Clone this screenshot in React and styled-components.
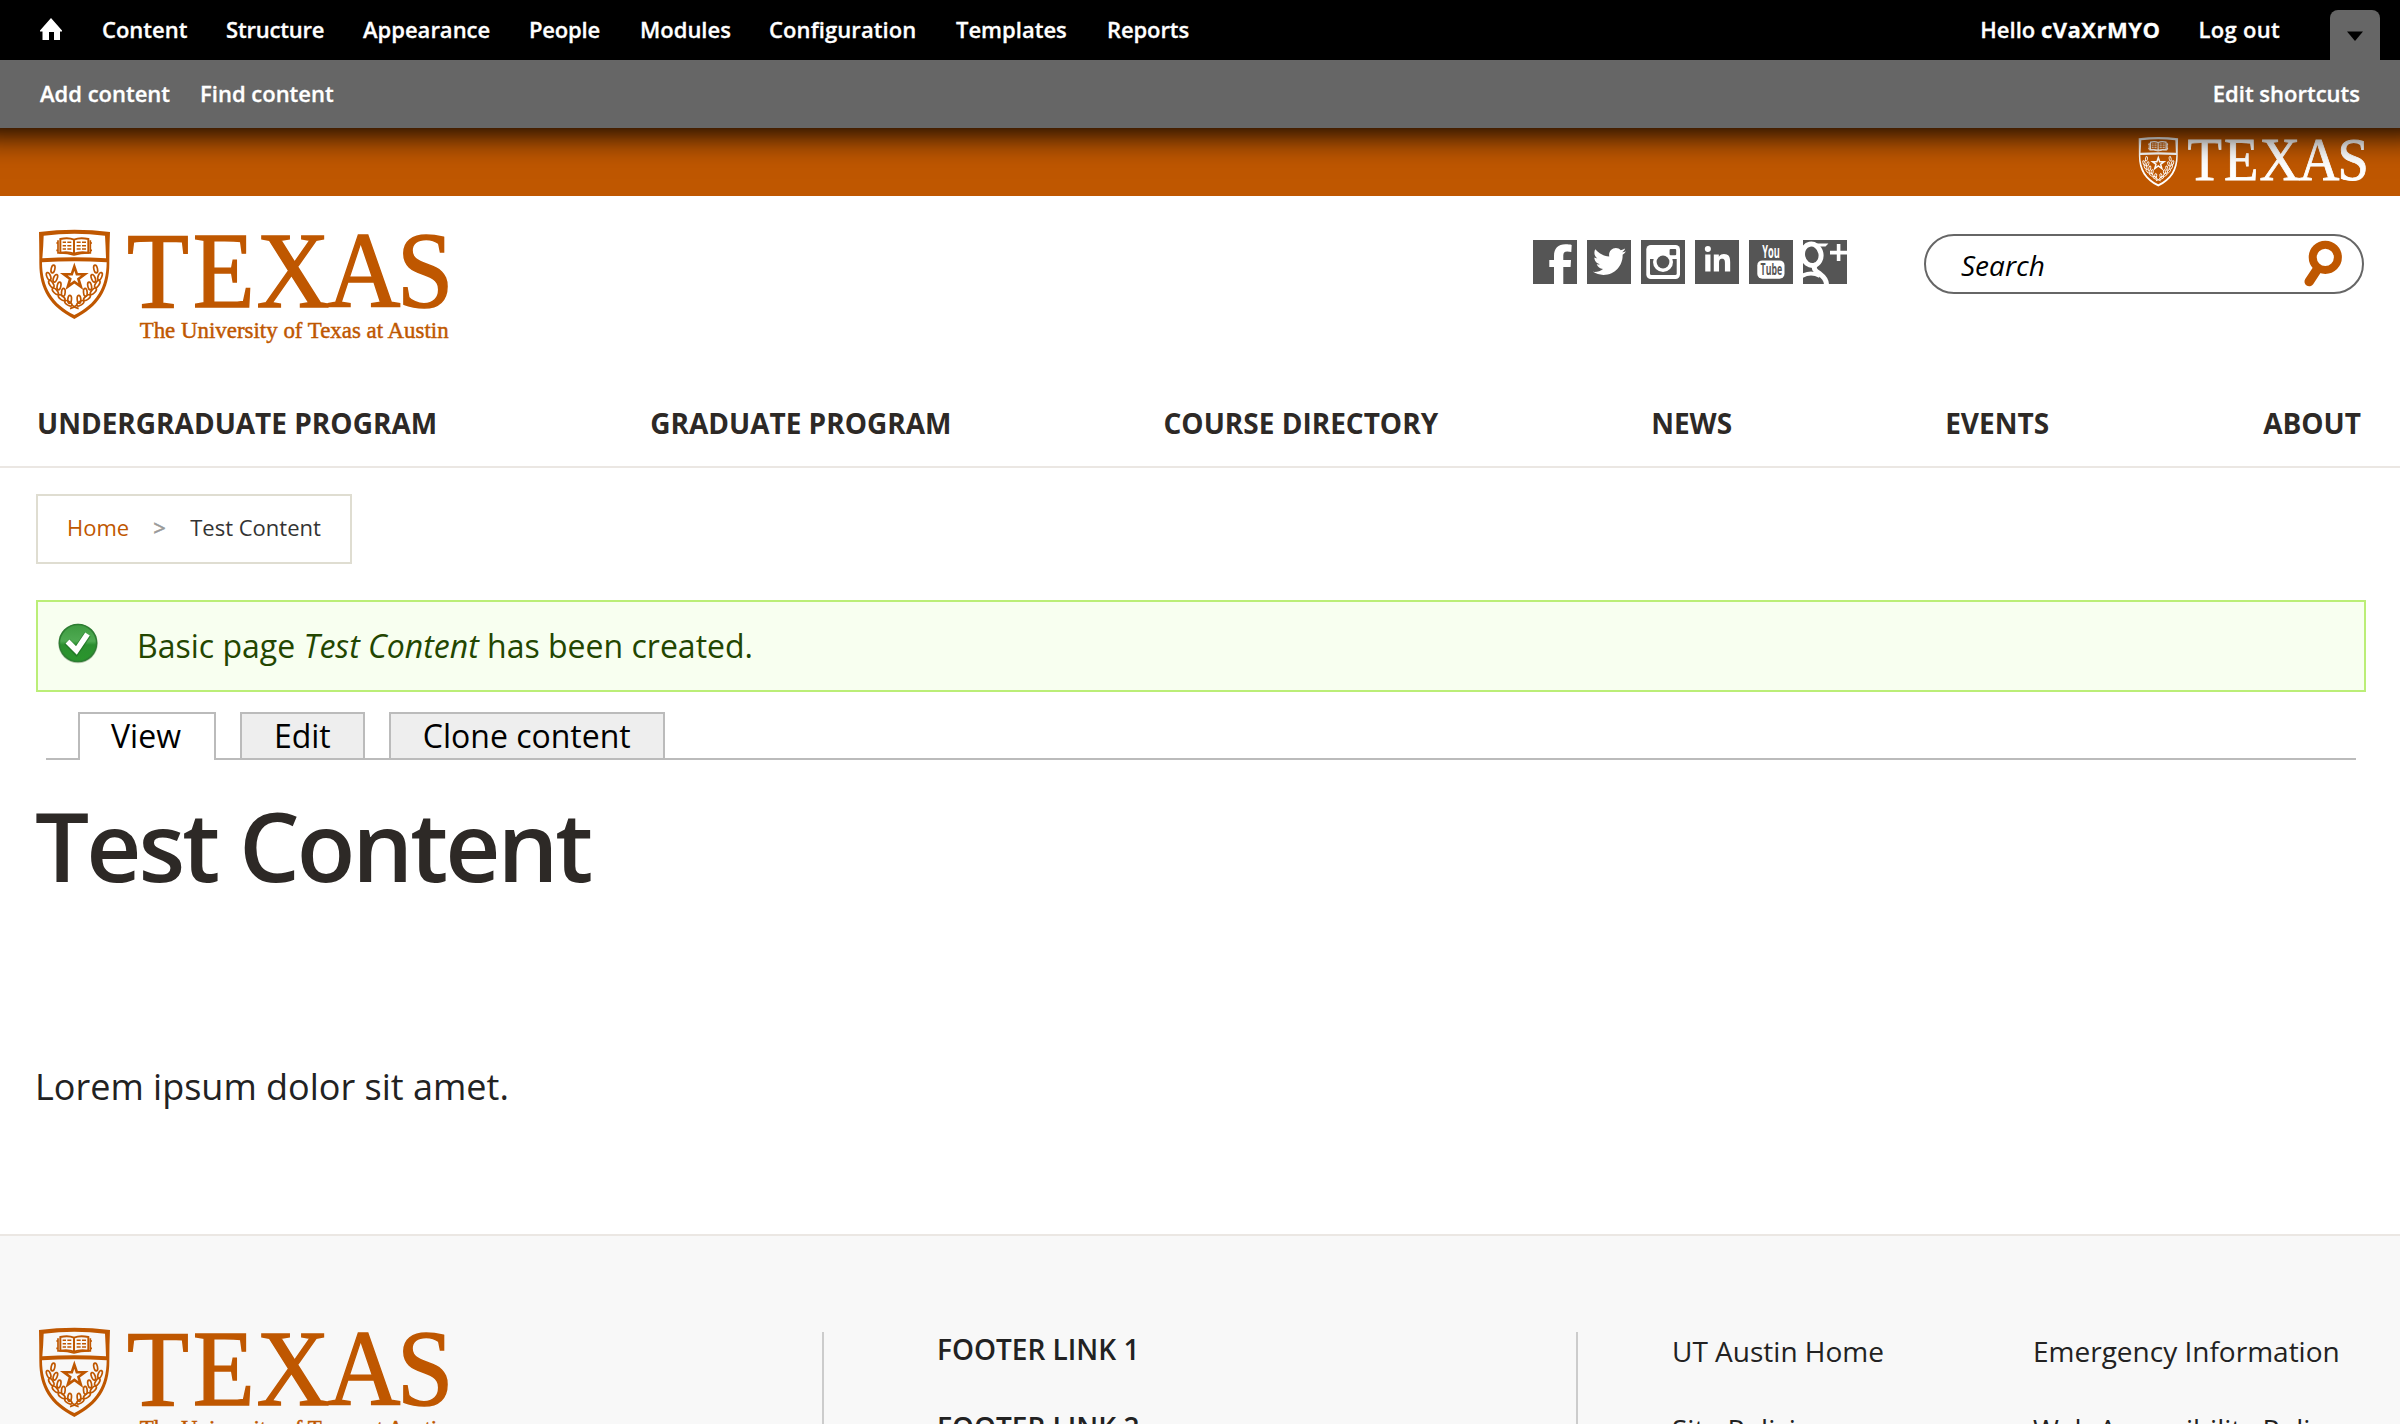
import React from "react";
import styled, { createGlobalStyle } from "styled-components";
import { FaTwitter, FaLinkedinIn } from "react-icons/fa";

const orange = "#bf5700";
const charcoal = "#2d2926";
const sans = `"Open Sans", "Noto Sans", sans-serif`;

const GlobalStyle = createGlobalStyle`
  *, *::before, *::after { box-sizing: border-box; }
  html, body { margin: 0; padding: 0; background: #fff; }
  body { font-family: ${sans}; color: #222; }
`;

const Page = styled.div`
  width: 2400px;
  height: 1424px;
  overflow: hidden;
  display: flex;
  flex-direction: column;
`;

/* ---------- admin toolbar ---------- */
const AdminBar = styled.div`
  position: relative;
  z-index: 2;
  flex: none;
  color: #fff;
  font-size: 22px;
  font-weight: 600;
  -webkit-text-stroke: 0.3px #fff;
  box-shadow: 0 -24px 30px 30px #000;
`;
const MenuRow = styled.div`
  display: flex;
  height: 60px;
  padding: 0 20px 0 40px;
  background: #000;
  line-height: 59px;
  white-space: nowrap;
`;
const HomeLink = styled.a`
  width: 62px;
  padding-top: 18px;
  svg { display: block; }
`;
const MenuLink = styled.a`
  width: ${(p) => p.$w}px;
  letter-spacing: ${(p) => p.$ls || 0}px;
`;
const UserArea = styled.div`
  display: flex;
  margin-left: auto;
`;
const Greeting = styled.span`
  margin-right: 38px;
  b { font-weight: 700; letter-spacing: 0.5px; }
`;
const LogOut = styled.a`
  margin-right: 50px;
  letter-spacing: 0.3px;
`;
const DrawerToggle = styled.div`
  display: flex;
  width: 50px;
  height: 50px;
  margin-top: 10px;
  padding: 21px 0 0 17px;
  border-radius: 8px 8px 0 0;
  background: #666;
`;
const ShortcutRow = styled.div`
  display: flex;
  gap: 30px;
  height: 68px;
  padding: 0 40px;
  background: #666;
  line-height: 67px;
`;
const EditShortcuts = styled.a`
  margin-left: auto;
`;

/* ---------- brand ---------- */
const BrandStrip = styled.div`
  flex: none;
  display: flex;
  justify-content: flex-end;
  height: 68px;
  padding: 8px 33px 0 0;
  background: ${orange};
  color: #fff;
`;
const LogoSvg = styled.svg`
  display: block;
  flex: none;
`;
const Header = styled.header`
  flex: none;
  height: 272px;
  border-bottom: 2px solid #ebe7e3;
`;
const HeaderTop = styled.div`
  display: flex;
  height: 198px;
  padding: 32px 36px 0;
  color: ${orange};
`;
const Social = styled.div`
  display: flex;
  gap: 10px;
  margin: 12px 77px 0 auto;
`;
const SocialTile = styled.a`
  width: 44px;
  height: 44px;
  overflow: hidden;
  background: #555;
  color: #fff;
  padding: ${(p) => p.$pad || 0};
  svg { display: block; }
`;
const SearchBox = styled.div`
  display: flex;
  justify-content: space-between;
  width: 440px;
  height: 60px;
  margin-top: 6px;
  padding: 0 18px 0 35px;
  border: 2px solid #666;
  border-radius: 30px;
  font-size: 28px;
  font-style: italic;
  line-height: 58px;
  color: #000;
`;
const MainNav = styled.nav`
  display: flex;
  justify-content: space-between;
  padding: 10px 39px 0 37px;
  font-size: 28px;
  font-weight: 700;
  line-height: 38px;
  color: ${charcoal};
  a:nth-child(n + 3):nth-child(-n + 5) { margin: 0 1px 0 -1px; }
`;

/* ---------- content ---------- */
const Content = styled.main`
  flex: none;
  display: flex;
  flex-direction: column;
  align-items: stretch;
  height: 766px;
  padding: 26px 34px 0 36px;
`;
const Breadcrumb = styled.div`
  display: flex;
  align-self: flex-start;
  width: 316px;
  height: 70px;
  padding-left: 29px;
  border: 2px solid #dfddd1;
  font-size: 22px;
  line-height: 63px;
  color: #333;
`;
const CrumbLink = styled.a`
  color: ${orange};
`;
const CrumbSep = styled.span`
  width: 61px;
  padding-left: 24px;
  color: #999;
  -webkit-text-stroke: 0.5px #999;
`;
const StatusMessage = styled.div`
  display: flex;
  align-items: center;
  height: 92px;
  margin-top: 36px;
  padding-left: 19px;
  border: 2px solid #bbee77;
  background: #f8fff0;
  color: #234600;
  font-size: 32px;
  svg { margin: -7px 38px 0 0; }
  div { margin-top: -1px; }
`;
const Tabs = styled.div`
  display: flex;
  gap: 24px;
  height: 48px;
  margin: 20px 10px 0;
  padding-left: 32px;
  border-bottom: 2px solid #bbb;
`;
const Tab = styled.a`
  height: ${(p) => (p.$active ? 48 : 46)}px;
  padding: 0 ${(p) => (p.$active ? 33 : 32)}px 0 ${(p) => (p.$active ? 31 : 32)}px;
  border: 2px solid #bbb;
  border-bottom: 0;
  background: ${(p) => (p.$active ? "#fff" : "#eee")};
  color: #000;
  font-size: 32px;
  line-height: 44px;
`;
const Title = styled.h1`
  margin: 20px 0 0 -1px;
  font-size: 96px;
  font-weight: 600;
  line-height: 130px;
  letter-spacing: -3.05px;
  color: ${charcoal};
`;
const Body = styled.p`
  margin: 152px 0 0 -1px;
  font-size: 36px;
  line-height: 50px;
  color: #222;
`;

/* ---------- footer ---------- */
const Footer = styled.footer`
  flex: none;
  display: flex;
  height: 190px;
  border-top: 2px solid #ebe7e3;
  background: #f8f8f8;
  font-size: 28px;
  color: #222;
`;
const FooterLogo = styled.div`
  width: 822px;
  padding: 90px 0 0 36px;
  color: ${orange};
`;
const FooterLinks = styled.div`
  display: flex;
  flex-direction: column;
  width: 754px;
  margin-top: 96px;
  padding-left: 113px;
  border-left: 2px solid #ccc;
  font-weight: 600;
  line-height: 34px;
  gap: 44px;
`;
const UtilityLinks = styled.div`
  display: grid;
  grid-template-columns: 361px auto;
  align-content: start;
  row-gap: 44px;
  margin-top: 96px;
  padding: 2px 0 0 94px;
  border-left: 2px solid #ccc;
  line-height: 34px;
  white-space: nowrap;
`;

const LEAVES = [
  [99, 177, 12], [86, 199, -22], [106, 205, 22], [94, 222, -32], [117, 228, 12],
  [106, 244, -42], [130, 247, 5], [125, 263, -52], [149, 268, 5], [145, 280, -58],
];

function Wreath() {
  return LEAVES.map(([x, y, a]) => (
    <ellipse key={`${x}-${y}`} cx={x} cy={y} rx="5.5" ry="12" transform={`rotate(${a} ${x} ${y})`} />
  ));
}

function TexasLogo({ width, tagline }) {
  const h = tagline ? 348 : 276;
  return (
    <LogoSvg width={width} height={(width * h) / 1242} viewBox={`48 54 1242 ${h}`} fill="currentColor">
      <path
        fillRule="evenodd"
        d="M57 66Q163 52 270 66Q268 110 268 160C268 240 235 290 163 327C91 290 58 240 58 160Q58 110 57 66Z
           M71 77Q163 66 255 77Q257 110 258 145Q163 139 67 145Q70 110 71 77Z
           M66 157Q163 151 260 157C260 232 228 284 163 315C98 284 66 232 66 157Z"
      />
      <g fill="none" stroke="currentColor">
        <path strokeWidth="6" d="M121 87Q145 81 162 89Q180 81 205 87V128Q180 124 162 131Q145 124 121 128ZM162 89V131" />
        <path strokeWidth="5" d="M114 91V129Q140 128 162 135Q185 128 211 129V91M109 99h6M109 121h6M210 99h6M210 121h6" />
        <path strokeWidth="4.5" d="M128 97h10m4 0h12M128 107h10m4 0h12M128 117h10m4 0h12M170 97h12m4 0h12M170 107h12m4 0h12M170 117h12m4 0h12" />
        <path
          strokeWidth="8"
          strokeMiterlimit="10"
          d="M163 170L170.6 192.5L194.4 192.8L175.4 207L182.4 229.7L163 216L143.6 229.7L150.6 207L131.6 192.8L155.4 192.5Z"
        />
        <g strokeWidth="5">
          <Wreath />
          <g transform="translate(326 0) scale(-1 1)">
            <Wreath />
          </g>
          <path d="M150 296Q164 292 172 284M176 296Q162 292 154 284" />
        </g>
      </g>
      <text
        transform="scale(0.93 1)"
        x="345 557 763 991 1216"
        y="290"
        fontFamily="'Liberation Serif', serif"
        fontSize="327"
        stroke="currentColor"
        strokeWidth="4.5"
      >
        TEXAS
      </text>
      {tagline && (
        <text
          x="359"
          y="383"
          fontFamily="'Liberation Serif', serif"
          fontSize="70"
          textLength="927"
          lengthAdjust="spacingAndGlyphs"
          stroke="currentColor"
          strokeWidth="1.4"
        >
          The University of Texas at Austin
        </text>
      )}
    </LogoSvg>
  );
}

function HomeIcon() {
  return (
    <svg width="22" height="22" viewBox="0 0 22 22" fill="#fff">
      <path d="M11 0L22 12.5V13.5H20V22H14V14H9V22H2.5V13.5H0V12.5Z" />
    </svg>
  );
}

function FacebookIcon() {
  return (
    <svg width="44" height="44" fill="#fff">
      <path d="M21 44V27H16.3V20H21V16C21 8.5 25 4.3 32.5 4.3C35 4.3 37 4.5 38.7 4.9L38.3 12C37 11.6 35.5 11.4 34.3 11.4C31.3 11.4 30.3 12.7 30.3 15.5V20H38L37.6 27H30.3V44Z" />
    </svg>
  );
}

function InstagramIcon() {
  return (
    <svg width="44" height="44">
      <rect x="5.3" y="5" width="33.7" height="34" rx="4.5" fill="#fff" />
      <path d="M9 19H35.7V33.5Q35.7 35 34.2 35H10.5Q9 35 9 33.5Z" fill="#555" />
      <circle cx="22" cy="22" r="10" fill="#fff" />
      <circle cx="22" cy="22" r="6.4" fill="#555" />
      <rect x="28.6" y="9" width="6.6" height="6.2" rx="1" fill="#555" />
    </svg>
  );
}

function YoutubeIcon() {
  return (
    <svg width="44" height="44" fontFamily="'Open Sans', sans-serif" fontWeight="700">
      <text x="13.2" y="18.3" fontSize="17.5" textLength="17.5" lengthAdjust="spacingAndGlyphs" fill="#fff">You</text>
      <rect x="8.3" y="20.4" width="27.2" height="18.3" rx="5" fill="#fff" />
      <text x="11.6" y="34.8" fontSize="15.5" textLength="21.5" lengthAdjust="spacingAndGlyphs" fill="#555">Tube</text>
    </svg>
  );
}

function GooglePlusIcon() {
  return (
    <svg width="44" height="44" fill="none" stroke="#fff">
      <path fill="#fff" stroke="none" d="M12 3.4H25.4L22.5 6.4H17Z" />
      <ellipse cx="8.8" cy="14.8" rx="9.2" ry="10.8" strokeWidth="5" transform="rotate(-12 8.8 14.8)" />
      <path strokeWidth="5" d="M13 24C9 29 13 31 17 34C21 37 23.5 40 23.5 45" />
      <path strokeWidth="4" d="M-1 36Q8 31 17 36" />
      <path strokeWidth="3.6" d="M27 12.6H44M35.6 4V21" />
    </svg>
  );
}

function SearchIcon() {
  return (
    <svg width="42" height="56" fill="none" stroke={orange}>
      <circle cx="23.3" cy="21.3" r="12.6" strokeWidth="8" />
      <path d="M15.5 33L7.2 45.6" strokeWidth="9.5" strokeLinecap="round" />
    </svg>
  );
}

function CheckIcon() {
  return (
    <svg width="42" height="42" viewBox="0 0 42 42">
      <defs>
        <linearGradient id="ok" x1="0" y1="0" x2="0" y2="1">
          <stop offset="0" stopColor="#3d9b40" />
          <stop offset="0.45" stopColor="#4faa52" />
          <stop offset="0.55" stopColor="#2b8f2f" />
          <stop offset="1" stopColor="#2a962c" />
        </linearGradient>
      </defs>
      <circle cx="21" cy="21.5" r="19.8" fill="#b9c9b1" />
      <circle cx="21" cy="21" r="18.6" fill="url(#ok)" stroke="#2d7d32" strokeWidth="1.5" />
      <path d="M10 19.5L19.2 29L30.5 12.5" fill="none" stroke="#1d6a22" strokeWidth="7.5" opacity="0.6" />
      <path d="M10.5 19.5L19.4 28.5L30.5 12" fill="none" stroke="#fff" strokeWidth="5.5" />
    </svg>
  );
}

const MENU = [
  ["Content", 124], ["Structure", 137, -0.2], ["Appearance", 166], ["People", 111, -0.2],
  ["Modules", 129], ["Configuration", 187, 0.1], ["Templates", 151], ["Reports", 90, -0.1],
];
const NAV = ["UNDERGRADUATE PROGRAM", "GRADUATE PROGRAM", "COURSE DIRECTORY", "NEWS", "EVENTS", "ABOUT"];

export default function App() {
  return (
    <Page>
      <GlobalStyle />
      <AdminBar>
        <MenuRow>
          <HomeLink><HomeIcon /></HomeLink>
          {MENU.map(([label, w, ls]) => (
            <MenuLink key={label} $w={w} $ls={ls}>{label}</MenuLink>
          ))}
          <UserArea>
            <Greeting>Hello <b>cVaXrMYO</b></Greeting>
            <LogOut>Log out</LogOut>
            <DrawerToggle>
              <svg width="16" height="10"><path d="M0 0.5H16L8 10Z" /></svg>
            </DrawerToggle>
          </UserArea>
        </MenuRow>
        <ShortcutRow>
          <a>Add content</a>
          <a>Find content</a>
          <EditShortcuts>Edit shortcuts</EditShortcuts>
        </ShortcutRow>
      </AdminBar>

      <BrandStrip><TexasLogo width={230} /></BrandStrip>

      <Header>
        <HeaderTop>
          <TexasLogo width={414} tagline />
          <Social>
            <SocialTile><FacebookIcon /></SocialTile>
            <SocialTile $pad="5px 6px"><FaTwitter size={33} /></SocialTile>
            <SocialTile><InstagramIcon /></SocialTile>
            <SocialTile $pad="6px 8px"><FaLinkedinIn size={29} /></SocialTile>
            <SocialTile><YoutubeIcon /></SocialTile>
            <SocialTile><GooglePlusIcon /></SocialTile>
          </Social>
          <SearchBox>
            Search
            <SearchIcon />
          </SearchBox>
        </HeaderTop>
        <MainNav>
          {NAV.map((label) => <a key={label}>{label}</a>)}
        </MainNav>
      </Header>

      <Content>
        <Breadcrumb>
          <CrumbLink>Home</CrumbLink>
          <CrumbSep>&gt;</CrumbSep>
          <span>Test Content</span>
        </Breadcrumb>
        <StatusMessage>
          <CheckIcon />
          <div>Basic page <em>Test Content</em> has been created.</div>
        </StatusMessage>
        <Tabs>
          <Tab $active>View</Tab>
          <Tab>Edit</Tab>
          <Tab>Clone content</Tab>
        </Tabs>
        <Title>Test Content</Title>
        <Body>Lorem ipsum dolor sit amet.</Body>
      </Content>

      <Footer>
        <FooterLogo><TexasLogo width={414} tagline /></FooterLogo>
        <FooterLinks>
          <a>FOOTER LINK 1</a>
          <a>FOOTER LINK 2</a>
        </FooterLinks>
        <UtilityLinks>
          <a>UT Austin Home</a>
          <a>Emergency Information</a>
          <a>Site Policies</a>
          <a>Web Accessibility Policy</a>
        </UtilityLinks>
      </Footer>
    </Page>
  );
}
